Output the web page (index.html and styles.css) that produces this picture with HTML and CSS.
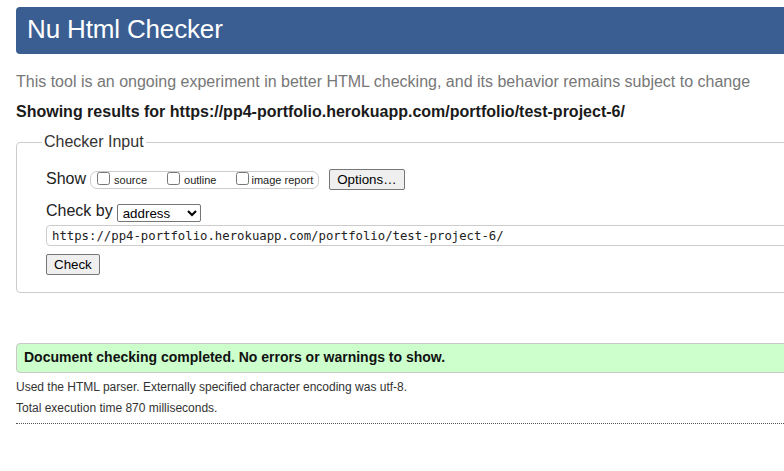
FILE: index.html
```html
<!DOCTYPE html>
<html lang="en">
<head>
<meta charset="utf-8">
<title>Nu Html Checker</title>
<link rel="stylesheet" href="styles.css">
</head>
<body>
<div class="page">
  <header class="banner"><h1 class="title">Nu Html Checker</h1></header>
  <p class="intro">This tool is an ongoing experiment in better HTML checking, and its behavior remains subject to change</p>
  <p class="results-for">Showing results for https://pp4-portfolio.herokuapp.com/portfolio/test-project-6/</p>
  <fieldset class="checker">
    <legend class="checker-legend">Checker Input</legend>
    <div class="row row-show">
      <span class="row-label">Show</span>
      <span class="opts">
        <label class="opt"><input type="checkbox" class="cb"><span class="opt-text gap4">source</span></label>
        <label class="opt"><input type="checkbox" class="cb"><span class="opt-text gap4">outline</span></label>
        <label class="opt"><input type="checkbox" class="cb"><span class="opt-text gap2">image report</span></label>
      </span>
      <button type="button" class="btn btn-options">Options…</button>
    </div>
    <div class="row row-by">
      <span class="row-label">Check by</span>
      <select class="sel"><option>address</option><option>file upload</option><option>text input</option></select>
    </div>
    <input type="text" class="url" value="https://pp4-portfolio.herokuapp.com/portfolio/test-project-6/">
    <div class="row row-submit">
      <button type="button" class="btn btn-check">Check</button>
    </div>
  </fieldset>
  <div class="success">Document checking completed. No errors or warnings to show.</div>
  <p class="meta first">Used the HTML parser. Externally specified character encoding was utf-8.</p>
  <p class="meta">Total execution time 870 milliseconds.</p>
  <div class="rule"></div>
</div>
</body>
</html>
```
FILE: styles.css
```css
html, body {
  margin: 0;
  padding: 0;
  overflow: hidden;
  background: #fff;
}
body {
  font-family: "Liberation Sans", Arial, sans-serif;
  color: #222;
}
.page {
  width: 1200px;
  padding: 7px 0 0 16px;
}
.banner {
  height: 47px;
  background: #3a5e91;
  border-radius: 4px;
  padding: 0 0 0 11px;
  box-sizing: border-box;
}
.title {
  margin: 0;
  font-weight: normal;
  font-size: 26px;
  line-height: 45px;
  color: #fff;
  letter-spacing: -0.15px;
}
.intro {
  margin: 19px 0 0;
  font-size: 16px;
  line-height: 18px;
  color: #777;
}
.results-for {
  margin: 12px 0 0;
  font-size: 16px;
  line-height: 18px;
  font-weight: bold;
  color: #1a1a1a;
}
.checker {
  margin: 12px 0 0;
  padding: 18px 29px 17px;
  border: 1px solid #ccc;
  border-radius: 4px;
  min-width: 0;
}
.checker-legend {
  margin-left: -4px;
  padding: 0 2px;
  font-size: 16px;
  line-height: 18px;
  color: #333;
}
.row {
  display: flex;
  align-items: flex-start;
}
.row-label {
  font-size: 16px;
  line-height: 18px;
  color: #222;
}
.row-show {
  height: 21px;
}
.row-show .row-label {
  margin-top: 1px;
}
.opts {
  display: flex;
  align-items: flex-start;
  margin: 2px 0 0 4px;
  height: 16px;
  border: 1px solid #ccc;
  border-radius: 7px;
  padding: 0 5px 0 6px;
}
.opt {
  display: flex;
  align-items: flex-start;
  margin-right: 20px;
}
.opt:last-child {
  margin-right: 0;
}
.cb {
  width: 13px;
  height: 13px;
  margin: 0;
}
.opt-text {
  font-size: 11px;
  line-height: 13px;
  padding-top: 2px;
  color: #222;
}
.gap4 { margin-left: 4px; }
.gap2 { margin-left: 2px; }
.btn {
  height: 21px;
  padding: 0 6px;
  font-family: "Liberation Sans", Arial, sans-serif;
  font-size: 13.33px;
  color: #000;
  background: #efefef;
  border: 1px solid #767676;
  border-radius: 2px;
}
.btn-options {
  margin-left: 10px;
  padding: 0 7px;
}
.btn-check {
  padding: 0 7px;
}
.row-by {
  margin-top: 12px;
  height: 19px;
}
.sel {
  margin: 2px 0 0 4px;
  width: 84px;
  height: 18px;
  font-family: "Liberation Sans", Arial, sans-serif;
  font-size: 13.33px;
  color: #000;
  background: #fff;
  border: 1px solid #767676;
  border-radius: 2px;
  padding: 0 0 0 1px;
}
.url {
  display: block;
  box-sizing: border-box;
  margin: 4px 0 0;
  width: 1000px;
  height: 21px;
  padding: 0 5px;
  border: 1px solid #ccc;
  border-radius: 4px;
  font-family: "DejaVu Sans Mono", "Liberation Mono", monospace;
  font-size: 12.3px;
  color: #222;
}
.row-submit {
  margin-top: 8px;
}
.success {
  margin-top: 50px;
  padding: 5px 7px 6px;
  border: 1px solid #c8c8c8;
  border-radius: 4px;
  background: #ccffcc;
  font-size: 14px;
  line-height: 17px;
  font-weight: bold;
  color: #111;
}
.meta {
  margin: 7px 0 0;
  font-size: 12px;
  line-height: 14px;
  color: #333;
}
.rule {
  margin-top: 8px;
  border-top: 1px dotted #555;
}
```
